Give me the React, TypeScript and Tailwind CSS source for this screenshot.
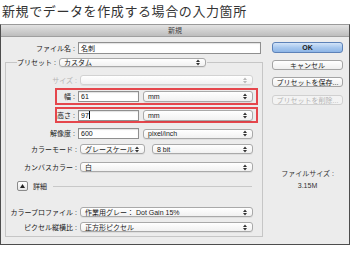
import { clsx } from "clsx"

const font = "font-['Liberation_Sans','Noto_Sans_CJK_JP',sans-serif]"

function Arrows({ dim }: { dim?: boolean }) {
    return (
        <svg width="4" height="7" viewBox="0 0 4 7" className="shrink-0">
            <path d="M0 3 L2 0.5 L4 3 Z M0 4 L2 6.5 L4 4 Z" fill={dim ? "#b8b8b8" : "#333"} />
        </svg>
    )
}

function Popup({ text, className, disabled }: { text?: string; className?: string; disabled?: boolean }) {
    return (
        <div className={clsx(
            "flex items-center justify-between rounded-[3px] border bg-linear-to-b from-white to-[#f1f1f1] pl-[4px] pr-[5px] text-[7px] leading-none shadow-[0_1px_0_rgba(0,0,0,0.06)]",
            disabled ? "border-[#d2d2d2] text-[#b0b0b0]" : "border-[#a9a9a9] text-[#1a1a1a]",
            className,
        )}>
            <span className="whitespace-nowrap">{text}</span>
            <Arrows dim={disabled} />
        </div>
    )
}

function Field({ value, className, caret }: { value: string; className?: string; caret?: boolean }) {
    return (
        <div className={clsx("flex items-center border border-[#8f8f8f] bg-white pl-[2px] text-[7px] leading-none text-[#111] shadow-[inset_0_1px_1px_rgba(0,0,0,0.12)]", className)}>
            <span>{value}</span>
            {caret && <span className="ml-[0.5px] h-[8px] w-px bg-black" />}
        </div>
    )
}

function Label({ text, className, disabled }: { text: string; className?: string; disabled?: boolean }) {
    return (
        <span className={clsx("shrink-0 whitespace-nowrap text-right text-[7px] leading-none", disabled ? "text-[#b4b4b4]" : "text-[#1a1a1a]", className)}>
            {text}<span className="ml-[2px] mr-[3px]">:</span>
        </span>
    )
}

function Button({ text, primary, disabled, className }: { text: string; primary?: boolean; disabled?: boolean; className?: string }) {
    return (
        <div className={clsx(
            "flex items-center justify-center whitespace-nowrap rounded-[3px] border text-[7px] leading-none",
            primary && "border-[#5d82b8] bg-linear-to-b from-[#d3e4f8] via-[#a8c8ee] to-[#8db5e6] text-[#1a1a1a] font-bold",
            !primary && !disabled && "border-[#a4a4a4] bg-linear-to-b from-white to-[#efefef] text-[#1a1a1a]",
            disabled && "border-[#d0d0d0] bg-[#f3f3f3] text-[#b4b4b4]",
            className,
        )}>
            {text}
        </div>
    )
}

export default function App() {
    return (
        <div className={clsx("h-[260px] w-[350px] overflow-hidden bg-white", font)}>
            <h1 className="h-[24px] pl-[2px] pt-[5px] text-[13px] leading-[14px] tracking-[0.6px] text-[#333]">
                新規でデータを作成する場合の入力箇所
            </h1>

            {/* dialog */}
            <div className="h-[221px] w-[350px] border border-[#4d4d4d] border-t-[#9a9a9a] bg-[#ececec]">
                <div className="flex h-[12px] items-center justify-center border-b border-[#9f9f9f] bg-linear-to-b from-[#e3e3e3] to-[#bdbdbd] text-[7px] leading-none text-[#444]">
                    新規
                </div>

                <div className="flex">
                    {/* left */}
                    <div className="w-[263px]">
                        <div className="mt-[5px] flex h-[12px] items-center">
                            <Label text="ファイル名" className="w-[77px]" />
                            <Field value="名刺" className="h-[12px] w-[183px]" />
                        </div>

                        <fieldset className="ml-[4px] mt-[4px] w-[258px] border border-[#c6c6c6] pb-[4px]">
                            <legend className="ml-[11px] flex h-[9px] items-center">
                                <Label text="プリセット" />
                                <Popup text="カスタム" className="h-[9px] w-[147px]" />
                                <span className="w-[1px]" />
                            </legend>

                            <div className="mt-[8px] flex h-[10px] items-center">
                                <Label text="サイズ" disabled className="w-[74px]" />
                                <Popup disabled className="h-[10px] w-[173px]" />
                            </div>

                            <div className="ml-[49px] mt-[3px] flex h-[17px] w-[203px] items-center border-2 border-[#e5464c]">
                                <Label text="幅" className="w-[21px]" />
                                <Field value="61" className="h-[11px] w-[61px]" />
                                <Popup text="mm" className="ml-[4px] h-[11px] w-[110px]" />
                            </div>
                            <div className="ml-[49px] mt-[2px] flex h-[16px] w-[203px] items-center border-2 border-[#e5464c]">
                                <Label text="高さ" className="w-[21px]" />
                                <Field value="97" caret className="h-[11px] w-[61px]" />
                                <Popup text="mm" className="ml-[4px] h-[11px] w-[110px]" />
                            </div>

                            <div className="mt-[5px] flex h-[11px] items-center">
                                <Label text="解像度" className="w-[72px]" />
                                <Field value="600" className="h-[11px] w-[61px]" />
                                <Popup text="pixel/inch" className="ml-[4px] h-[10px] w-[110px]" />
                            </div>

                            <div className="mt-[5px] flex h-[10px] items-center">
                                <Label text="カラーモード" className="w-[74px]" />
                                <Popup text="グレースケール" className="h-[10px] w-[65px]" />
                                <Popup text="8 bit" className="ml-[7px] h-[10px] w-[101px]" />
                            </div>

                            <div className="mt-[8px] flex h-[10px] items-center">
                                <Label text="カンバスカラー" className="w-[74px]" />
                                <Popup text="白" className="h-[10px] w-[173px]" />
                            </div>

                            <div className="mt-[9px] flex h-[10px] items-center">
                                <div className="ml-[11px] flex h-[10px] w-[11px] items-center justify-center rounded-[2px] border border-[#8a8a8a] bg-linear-to-b from-white to-[#e6e6e6]">
                                    <svg width="5" height="4" viewBox="0 0 5 4"><path d="M0 4 L2.5 0 L5 4 Z" fill="#222" /></svg>
                                </div>
                                <span className="ml-[5px] text-[7px] leading-none text-[#1a1a1a]">詳細</span>
                                <span className="ml-[6px] h-px w-[199px] bg-[#c8c8c8]" />
                            </div>

                            <div className="mt-[16px] flex h-[10px] items-center">
                                <Label text="カラープロファイル" className="w-[74px]" />
                                <Popup text="作業用グレー： Dot Gain 15%" className="h-[10px] w-[173px]" />
                            </div>

                            <div className="mt-[5px] flex h-[10px] items-center">
                                <Label text="ピクセル縦横比" className="w-[74px]" />
                                <Popup text="正方形ピクセル" className="h-[10px] w-[173px]" />
                            </div>
                        </fieldset>
                    </div>

                    {/* right */}
                    <div className="ml-[8px] w-[71px]">
                        <Button text="OK" primary className="mt-[5px] h-[11px]" />
                        <Button text="キャンセル" className="mt-[7px] h-[10px]" />
                        <Button text="プリセットを保存..." className="mt-[7px] h-[10px]" />
                        <Button text="プリセットを削除..." disabled className="mt-[8px] h-[10px]" />
                        <p className="mt-[65px] text-center text-[7px] leading-none text-[#333]">ファイルサイズ :</p>
                        <p className="mt-[5px] text-center text-[7px] leading-none text-[#333]">3.15M</p>
                    </div>
                </div>
            </div>
        </div>
    )
}
